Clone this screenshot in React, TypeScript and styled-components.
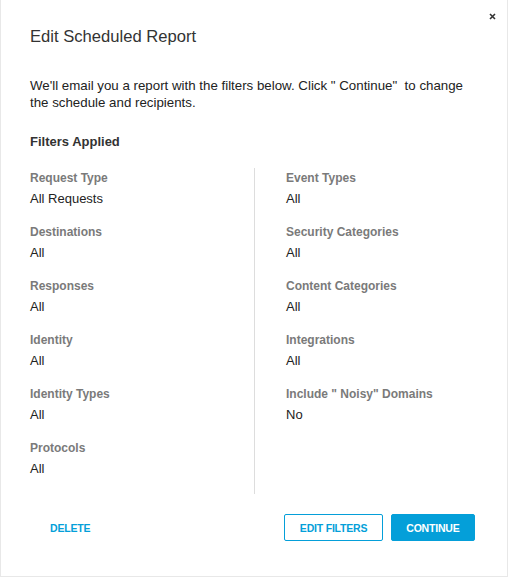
import styled, { createGlobalStyle } from 'styled-components'

const GlobalStyle = createGlobalStyle`
  html, body {
    margin: 0;
    padding: 0;
    background: #ffffff;
  }
  body {
    font-family: "Liberation Sans", Arial, Helvetica, sans-serif;
    color: #222222;
  }
`

const BLUE = '#049fd9'

interface Filter {
  label: string
  value: string
}

const leftFilters: Filter[] = [
  { label: 'Request Type', value: 'All Requests' },
  { label: 'Destinations', value: 'All' },
  { label: 'Responses', value: 'All' },
  { label: 'Identity', value: 'All' },
  { label: 'Identity Types', value: 'All' },
  { label: 'Protocols', value: 'All' },
]

const rightFilters: Filter[] = [
  { label: 'Event Types', value: 'All' },
  { label: 'Security Categories', value: 'All' },
  { label: 'Content Categories', value: 'All' },
  { label: 'Integrations', value: 'All' },
  { label: 'Include " Noisy"  Domains', value: 'No' },
]

const Modal = styled.div`
  position: relative;
  box-sizing: border-box;
  width: 508px;
  height: 577px;
  border: 1px solid #e8e8e8;
  border-top: none;
  background: #ffffff;
  padding: 27px 32px 0 29px;
  display: flex;
  flex-direction: column;
`

const CloseButton = styled.button`
  position: absolute;
  top: 10px;
  right: 9px;
  border: none;
  background: none;
  padding: 0;
  width: 12px;
  height: 12px;
  display: flex;
  align-items: center;
  justify-content: center;
  cursor: pointer;
`

const Title = styled.h2`
  margin: 0;
  font-size: 16.6px;
  font-weight: 400;
  line-height: 20px;
  color: #333333;
`

const Intro = styled.p`
  margin: 30px 0 0;
  font-size: 13.3px;
  line-height: 17px;
  color: #222222;
`

const SectionHeading = styled.h3`
  margin: 22px 0 0;
  font-size: 13px;
  font-weight: 700;
  line-height: 18px;
  color: #333333;
`

const Columns = styled.div`
  display: grid;
  grid-template-columns: 224px 1fr;
  margin-top: 17px;
`

const Column = styled.div<{ $divided?: boolean }>`
  display: flex;
  flex-direction: column;
  gap: 16px;
  padding: 2px 0 16px ${(p) => (p.$divided ? '31px' : '0')};
  border-left: ${(p) => (p.$divided ? '1px solid #dddddd' : 'none')};
`

const Item = styled.div`
  display: flex;
  flex-direction: column;
  gap: 4px;
`

const Label = styled.span`
  font-size: 12px;
  font-weight: 700;
  line-height: 16px;
  color: #7a7a7a;
`

const Value = styled.span`
  font-size: 13px;
  line-height: 18px;
  color: #222222;
`

const Footer = styled.div`
  display: flex;
  align-items: center;
  margin-top: 20px;
  gap: 8px;
`

const Spacer = styled.div`
  flex: 1;
`

const Button = styled.button<{ $variant: 'link' | 'outline' | 'primary' }>`
  box-sizing: border-box;
  height: 27px;
  padding: 0 ${(p) => (p.$variant === 'link' ? '19px' : '14.5px')};
  font-family: inherit;
  font-size: 10.5px;
  font-weight: 700;
  letter-spacing: -0.2px;
  text-transform: uppercase;
  border-radius: 2px;
  cursor: pointer;
  border: 1px solid ${(p) => (p.$variant === 'link' ? 'transparent' : BLUE)};
  background: ${(p) => (p.$variant === 'primary' ? BLUE : '#ffffff')};
  color: ${(p) => (p.$variant === 'primary' ? '#ffffff' : BLUE)};
`

function FilterColumn({ items, divided }: { items: Filter[]; divided?: boolean }) {
  return (
    <Column $divided={divided}>
      {items.map((f) => (
        <Item key={f.label}>
          <Label>{f.label}</Label>
          <Value>{f.value}</Value>
        </Item>
      ))}
    </Column>
  )
}

export default function App() {
  return (
    <>
      <GlobalStyle />
      <Modal>
        <CloseButton aria-label="close">
          <svg width="7" height="7" viewBox="0 0 7 7">
            <path d="M1 1L6 6M6 1L1 6" stroke="#333" strokeWidth="1.6" />
          </svg>
        </CloseButton>
        <Title>Edit Scheduled Report</Title>
        <Intro>
          We'll email you a report with the filters below. Click " Continue"&nbsp; to change the
          schedule and recipients.
        </Intro>
        <SectionHeading>Filters Applied</SectionHeading>
        <Columns>
          <FilterColumn items={leftFilters} />
          <FilterColumn items={rightFilters} divided />
        </Columns>
        <Footer>
          <Button $variant="link">Delete</Button>
          <Spacer />
          <Button $variant="outline">Edit Filters</Button>
          <Button $variant="primary">Continue</Button>
        </Footer>
      </Modal>
    </>
  )
}
